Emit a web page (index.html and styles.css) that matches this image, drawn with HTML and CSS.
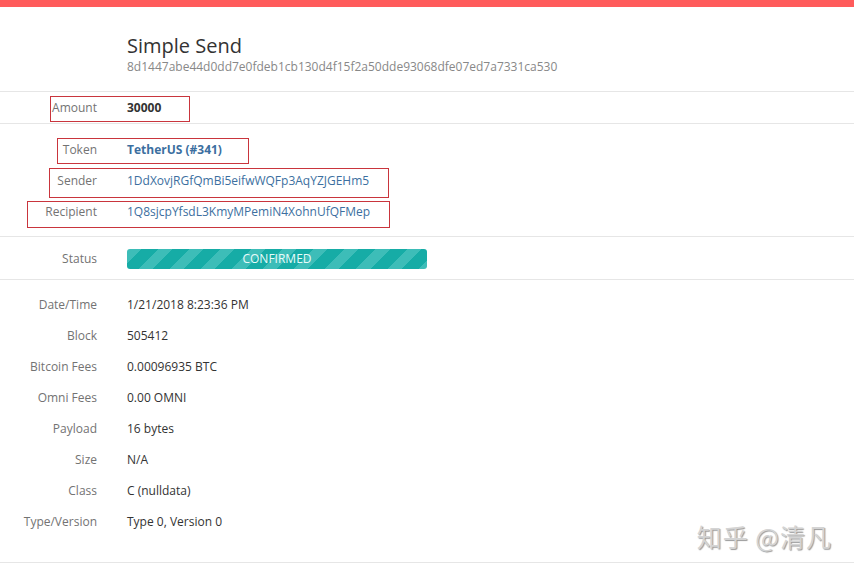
FILE: index.html
```html
<!DOCTYPE html>
<html lang="en">
<head>
  <meta charset="UTF-8">
  <title>Simple Send</title>
  <link rel="stylesheet" href="styles.css">
</head>
<body>
  <div class="topbar"></div>

  <div class="header">
    <h1 class="title">Simple Send</h1>
    <div class="txid">8d1447abe44d0dd7e0fdeb1cb130d4f15f2a50dde93068dfe07ed7a7331ca530</div>
  </div>

  <div class="section amount-section">
    <div class="row">
      <span class="label">Amount</span>
      <span class="value strong">30000</span>
    </div>
    <div class="mark mark-amount"></div>
  </div>

  <div class="section parties">
    <div class="row">
      <span class="label">Token</span>
      <span class="value link strong">TetherUS (#341)</span>
    </div>
    <div class="row">
      <span class="label">Sender</span>
      <span class="value link">1DdXovjRGfQmBi5eifwWQFp3AqYZJGEHm5</span>
    </div>
    <div class="row">
      <span class="label">Recipient</span>
      <span class="value link">1Q8sjcpYfsdL3KmyMPemiN4XohnUfQFMep</span>
    </div>
    <div class="mark mark-token"></div>
    <div class="mark mark-sender"></div>
    <div class="mark mark-recipient"></div>
  </div>

  <div class="section status-section">
    <div class="row">
      <span class="label">Status</span>
      <span class="status-bar">CONFIRMED</span>
    </div>
  </div>

  <div class="section details">
    <div class="row"><span class="label">Date/Time</span><span class="value">1/21/2018 8:23:36 PM</span></div>
    <div class="row"><span class="label">Block</span><span class="value">505412</span></div>
    <div class="row"><span class="label">Bitcoin Fees</span><span class="value">0.00096935 BTC</span></div>
    <div class="row"><span class="label">Omni Fees</span><span class="value">0.00 OMNI</span></div>
    <div class="row"><span class="label">Payload</span><span class="value">16 bytes</span></div>
    <div class="row"><span class="label">Size</span><span class="value">N/A</span></div>
    <div class="row"><span class="label">Class</span><span class="value">C (nulldata)</span></div>
    <div class="row"><span class="label">Type/Version</span><span class="value">Type 0, Version 0</span></div>
    <div class="watermark">知乎 @清凡</div>
  </div>
</body>
</html>
```

FILE: styles.css
```css
* {
  margin: 0;
  padding: 0;
  box-sizing: border-box;
}

body {
  font-family: 'Open Sans', 'Noto Sans', sans-serif;
  background: #fff;
  color: #333;
  width: 854px;
  height: 576px;
  overflow: hidden;
}

.topbar {
  height: 7px;
  background: #ff5b5b;
}

.header {
  padding: 27px 0 0 127px;
  height: 85px;
  border-bottom: 1px solid #e6e6e6;
}

.title {
  font-size: 20px;
  font-weight: 400;
  line-height: 24px;
  color: #333;
}

.txid {
  font-size: 12px;
  line-height: 18px;
  color: #888;
}

.section {
  position: relative;
  border-bottom: 1px solid #e6e6e6;
}

.row {
  display: flex;
  align-items: center;
  height: 31px;
  font-size: 12px;
}

.label {
  width: 97px;
  text-align: right;
  color: #737373;
  margin-right: 30px;
}

.value {
  color: #333;
}

.strong {
  font-weight: 700;
}

.link {
  color: #3c6fa0;
}

.amount-section {
  height: 32px;
}

.parties {
  padding: 10px 0 10px;
  height: 113px;
}

.status-section {
  height: 43px;
  padding-top: 6px;
}

.status-bar {
  display: block;
  width: 300px;
  height: 20px;
  line-height: 20px;
  border-radius: 3px;
  text-align: center;
  color: #e8fbfa;
  font-size: 12px;
  background: repeating-linear-gradient(135deg, #3dbdb8 0 10px, #16aca6 10px 22px);
}

.details {
  height: 283px;
  padding-top: 9px;
}

.mark {
  position: absolute;
  border: 1px solid #c9353d;
}

.mark-amount {
  left: 50px;
  top: 4px;
  width: 140px;
  height: 26px;
}

.mark-token {
  left: 57px;
  top: 14px;
  width: 192px;
  height: 26px;
}

.mark-sender {
  left: 49px;
  top: 44px;
  width: 340px;
  height: 30px;
}

.mark-recipient {
  left: 27px;
  top: 77px;
  width: 363px;
  height: 27px;
}

.watermark {
  position: absolute;
  right: 22px;
  bottom: 8px;
  font-family: 'Noto Sans CJK SC', sans-serif;
  font-size: 25px;
  letter-spacing: 1px;
  color: #d4d4d4;
  text-shadow: 1px 1px 1px #9a9a9a;
}
```
